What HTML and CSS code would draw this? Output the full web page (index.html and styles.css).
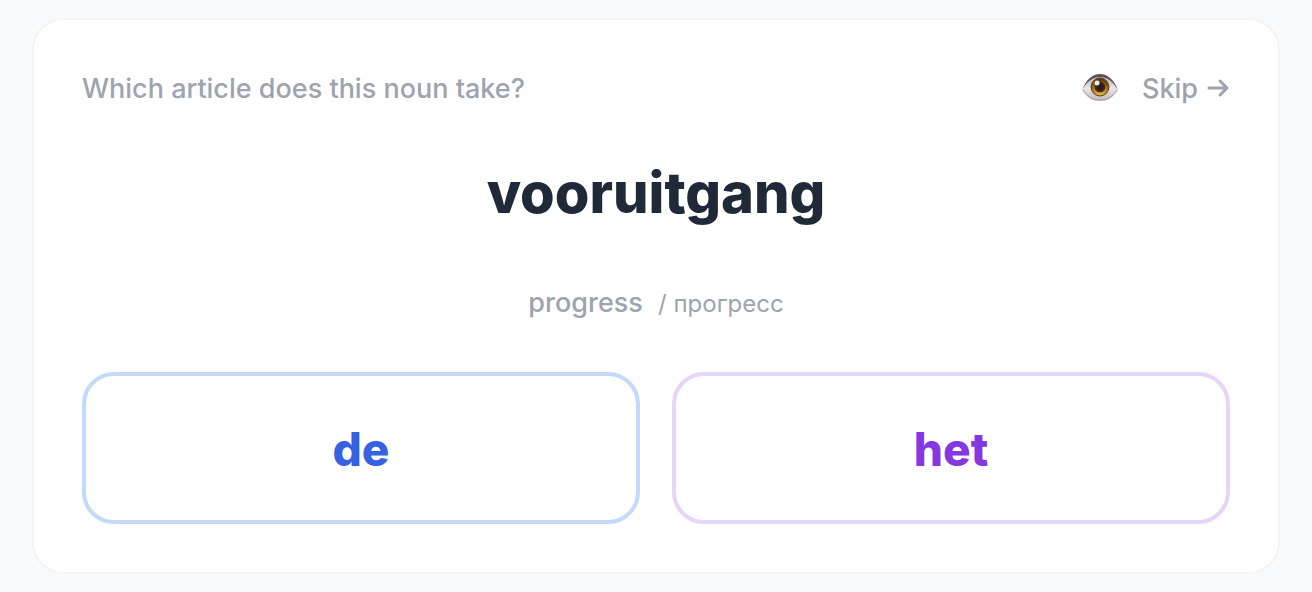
FILE: index.html
```html
<!DOCTYPE html>
<html lang="en">
<head>
  <meta charset="UTF-8" />
  <meta name="viewport" content="width=device-width, initial-scale=1.0" />
  <title>De or Het</title>
  <link rel="stylesheet" href="styles.css">
</head>
<body>
  <main class="card">
    <div class="card-top">
      <p class="question">Which article does this noun take?</p>
      <div class="actions">
        <button type="button" class="eye" aria-label="Toggle translation">
          <svg width="36" height="28" viewBox="0 0 36 28" aria-hidden="true">
            <defs>
              <linearGradient id="white" x1="0" y1="0" x2="0" y2="1">
                <stop offset="0" stop-color="#b5adb2" />
                <stop offset="0.5" stop-color="#ebe5e9" />
                <stop offset="1" stop-color="#c2b7bd" />
              </linearGradient>
              <radialGradient id="iris" cx="50%" cy="80%" r="75%">
                <stop offset="0" stop-color="#f0c040" />
                <stop offset="0.5" stop-color="#b88018" />
                <stop offset="1" stop-color="#4a3216" />
              </radialGradient>
              <radialGradient id="pupil">
                <stop offset="0.5" stop-color="#2c1a17" />
                <stop offset="1" stop-color="#5a351c" />
              </radialGradient>
            </defs>
            <path d="M0 16C5 6 11 2 18 2C26 2 32 7 36 16C31 24 26 27 18 27C10 27 5 24 0 16Z" fill="url(#white)" />
            <path d="M1 16C6 23 11 26 18 26C25 26 30 23 35 16" fill="none" stroke="#a79ba1" />
            <circle cx="18" cy="13" r="9" fill="url(#iris)" stroke="#5c4420" />
            <circle cx="18" cy="13" r="5.5" fill="url(#pupil)" />
            <path d="M0 16C5 7 11 3 18 3C26 3 31 8 36 16C32 6 26 0 18 0C10 0 4 6 0 16Z" fill="#5f5457" />
            <circle cx="15" cy="9" r="2.5" fill="#fff" opacity="0.9" />
          </svg>
        </button>
        <button type="button" class="skip">Skip
          <svg width="22" height="20" viewBox="0 0 22 20" aria-hidden="true">
            <path d="M1 10H19M12 3L19 10L12 17" />
          </svg>
        </button>
      </div>
    </div>

    <h1 class="word">vooruitgang</h1>

    <p class="translation">progress <span class="second" lang="ru">/ прогресс</span></p>

    <div class="answers">
      <button type="button" class="answer de">de</button>
      <button type="button" class="answer het">het</button>
    </div>
  </main>
</body>
</html>
```

FILE: styles.css
```css
* { box-sizing: border-box; }
body { margin: 0; padding: 18px 32px; background: #f9fafc; font-family: Inter, "Liberation Sans", sans-serif; }
button { font: inherit; background: none; border: none; padding: 0; cursor: pointer; }
h1, p { margin: 0; }

.card { background: #fff; border: 2px solid #f3f4f6; border-radius: 32px; padding: 48px; text-align: center; }
.card-top { display: flex; justify-content: space-between; align-items: center; height: 40px; color: #9ea3af; font-size: 27px; font-weight: 500; }
.actions { display: flex; align-items: center; gap: 24px; }
.eye, .eye svg { display: block; }
.skip { display: flex; align-items: center; gap: 10px; color: #9ea3af; }
.skip svg { fill: none; stroke: #9ea3af; stroke-width: 3; stroke-linecap: round; stroke-linejoin: round; overflow: visible; }

.word { margin-top: 49px; font-size: 56px; line-height: 72px; font-weight: 800; color: #1f2937; }
.translation { margin-top: 54px; font-size: 27px; line-height: 40px; font-weight: 500; color: #9ea3af; }
.second { margin-left: 8px; font-size: 24px; font-weight: 400; }

.answers { display: grid; grid-template-columns: 1fr 1fr; gap: 32px; margin-top: 48px; }
.answer { padding: 41px 0 39px; border: 4px solid; border-radius: 32px; font-size: 46px; line-height: 64px; font-weight: 800; }
.de { color: #3761e3; border-color: #c4dafb; }
.het { color: #8537e0; border-color: #e6d5fb; }
```
